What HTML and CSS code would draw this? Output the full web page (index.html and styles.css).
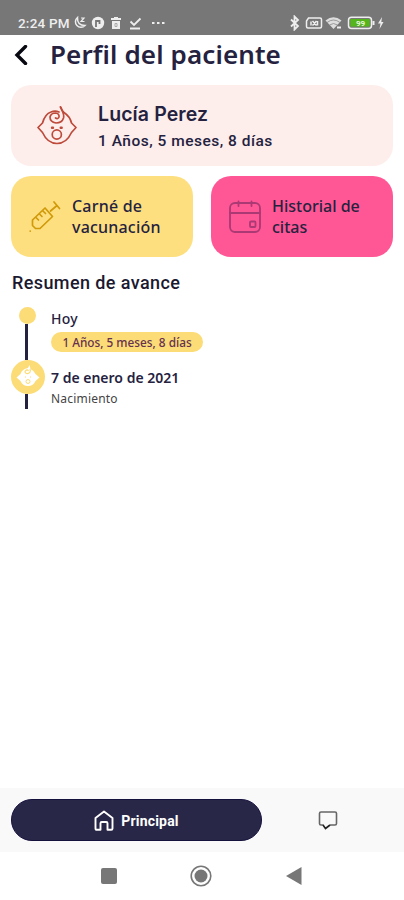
FILE: index.html
```html
<!DOCTYPE html>
<html lang="es">
<head>
<meta charset="utf-8">
<title>Perfil del paciente</title>
<link rel="stylesheet" href="styles.css">
</head>
<body>
<div class="status">
  <span class="time">2:24 PM</span>
  <svg class="left-icons" width="98" height="16" viewBox="0 0 98 16" fill="none" stroke="#eee" stroke-width="1.5">
    <path d="M5.500 2.500A5.500 5.500 0 1 0 13 10.500Q5 10.500 5.500 2.500Z"/><path d="M9 3h3l-3 3.500h3.500" stroke-width="1.200"/>
    <circle cx="26" cy="8" r="6.200" fill="#eee" stroke="none"/><path d="M24 12V6h3.500v3" stroke="#777" stroke-width="1.800"/>
    <path d="M39 4h10M42 3h4" stroke-width="2"/><path d="M40 6h8v8h-8z" fill="#eee" stroke="none"/><path d="M43 8.500h2v3h-2z" stroke="#aaa" stroke-width="1"/>
    <path d="M58 13.500h10M58.500 6.500l3.500 3.500 6.500-6.500" stroke-width="1.800"/>
    <path d="M80 8h2.500M85 8h2.500M90 8h2.500" stroke-width="2"/>
  </svg>
  <svg class="right-icons" width="98" height="16" viewBox="0 0 98 16" fill="none" stroke="#eee" stroke-width="1.500">
    <path d="M2 4.500l7 6.500-3.500 3.500v-13L9 5l-7 6.500" stroke-width="1.800"/>
    <path d="M19.500 3H31q1.500 0 1.500 1.500v7q0 1.500-1.500 1.500H19q-1.500 0-1.500-1.500V6z"/><path d="M22 6.500v4M28.500 6v4.500M23.500 6l4 4.500M27.500 6l-4 4.500"/>
    <path d="M36.500 5.500q8-6.500 16 0L44.500 14z" fill="#ddd" stroke="none"/><path d="M38 7.500q6.500-5 13 0M40.500 10q4-3 8 0" stroke="#888" stroke-width=".8"/><path d="M48 12.500h4" stroke-width="2"/>
    <rect x="59.500" y="2.200" width="23" height="11.200" rx="3"/><path d="M84.500 6v4" stroke-width="2"/><rect x="61.300" y="4" width="19.400" height="7.600" fill="#55b51d" stroke="none"/>
    <text x="71.500" y="10.800" class="battery">99</text>
    <path d="M93 2l-4 6.500h2.500l-1 5.500 4-7h-2.200z" fill="#eee" stroke="none"/>
  </svg>
</div>
<header class="title-bar">
  <svg width="14" height="20" viewBox="0 0 14 20" fill="none" stroke="#080811" stroke-width="3.400"><path d="M11.500 1.500L3 10l8.500 8.500" stroke-linecap="round"/></svg>
  <h1>Perfil del paciente</h1>
</header>
<main>
  <section class="patient">
    <svg width="42" height="40" viewBox="0 0 42 40" fill="none" stroke="#bd4a3a" stroke-width="1.700" stroke-linecap="round" stroke-linejoin="round">
      <path d="M24.500 1q1 3.500 3.500 5.500 6 4 7.500 10.500L40 21.500l-4.500 5Q30.500 37.500 21 37.500T6.500 26.500L2 21.500 6.500 17Q9 8 15 6q4-1.700 8 0"/>
      <path d="M24.500 1q4 7 3 11-1.500 5-7.500 5-6-1-6-6 1-4 5.500-4 4 .5 3.500 4-1 2.500-3.500 1"/>
      <circle cx="20.800" cy="28.500" r="4.600"/><path d="M16 21.800h1M24.700 21.800h1" stroke-width="2.400"/>
    </svg>
    <div class="who"><div class="name">Lucía Perez</div><div class="age">1 Años, 5 meses, 8 días</div></div>
  </section>
  <nav class="cards">
    <a class="card yellow">
      <svg width="34" height="34" viewBox="0 0 34 34" fill="none" stroke="#d09a08" stroke-width="1.700" stroke-linecap="round" stroke-linejoin="round">
        <path d="M26 2l5.500 6.500M29 5.500L22.500 11M17 8L24.500 16.500 12 28.500H7.500L4.500 25.500V20zM2.200 31v.1M15 11l2.500 2.500M11.500 14l2.500 2.500M8 17.500l2.500 2.500"/>
      </svg>
      <span>Carné de<br>vacunación</span>
    </a>
    <a class="card pink">
      <svg width="34" height="34" viewBox="0 0 34 34" fill="none" stroke="#aa3974" stroke-width="1.800" stroke-linecap="round">
        <rect x="2" y="3" width="30" height="29" rx="5"/><path d="M2 13h30M10.500 1.500V6M23.500 1.500V6"/><rect x="22" y="21.500" width="5.500" height="5.500" rx="1"/>
      </svg>
      <span>Historial de<br>citas</span>
    </a>
  </nav>
  <h2>Resumen de avance</h2>
  <section class="timeline">
    <div class="track">
      <span class="dot"></span><span class="line long"></span>
      <span class="baby"><svg width="24" height="24" viewBox="0 0 24 24"><path d="M12 3l1.500-3 1 4q4 2 5 5l4 3.500-4 3.500q-2 5-7.500 5t-7.500-5l-4-3.500L4.500 9Q6 4 12 3z" fill="#fff"/><path d="M14 4c2 5-5 6-5 2.500q2-3 3.500-.5M9 12h1M14 12h1" fill="none" stroke="#fcdc76" stroke-width="1.200"/><circle cx="12" cy="16.500" r="2" fill="none" stroke="#fcdc76"/></svg></span>
      <span class="line short"></span>
    </div>
    <div class="events">
      <div class="today">Hoy</div>
      <div class="pill">1 Años, 5 meses, 8 días</div>
      <div class="date">7 de enero de 2021</div>
      <div class="birth">Nacimiento</div>
    </div>
  </section>
</main>
<nav class="tabs">
  <a class="tab-main">
    <svg width="20" height="21" viewBox="0 0 20 21" fill="none" stroke="#fff" stroke-width="1.900" stroke-linejoin="round"><path d="M1.500 8L10 1.500 18.500 8v10.500q0 1.300-1.300 1.300H13.500v-6.500q0-1.300-1.300-1.300H7.800q-1.300 0-1.300 1.300v6.500H2.800q-1.300 0-1.300-1.300z"/></svg>
    <span>Principal</span>
  </a>
  <a class="tab-chat"><svg width="20" height="20" viewBox="0 0 20 20" fill="none" stroke="#666" stroke-width="1.600"><path d="M5.500 15H3q-1.500 0-1.500-1.500V3.500Q1.500 2 3 2h14q1.500 0 1.500 1.500v10Q18.500 15 17 15h-5"/><path d="M5 15l2.500 3.500L12 15" stroke="#222"/></svg></a>
</nav>
<footer class="system">
  <svg width="16" height="16" viewBox="0 0 16 16"><rect width="16" height="16" rx="2" fill="#777"/></svg>
  <svg width="22" height="22" viewBox="0 0 22 22"><circle cx="11" cy="11" r="9.800" fill="none" stroke="#777" stroke-width="1.600"/><circle cx="11" cy="11" r="6.500" fill="#777"/></svg>
  <svg width="16" height="18" viewBox="0 0 16 18"><path d="M0 9L15.500 0v18z" fill="#777"/></svg>
</footer>
</body>
</html>
```
FILE: styles.css
```css
* { box-sizing: border-box; }
body { margin: 0; width: 404px; height: 900px; display: flex; flex-direction: column; background: #fff; color: #25223f; font-family: "Noto Sans", sans-serif; overflow: hidden; }
h1, h2 { margin: 0; font-weight: 600; }
svg { display: block; flex: none; }
.status { height: 35px; background: #777; display: flex; align-items: center; padding: 11px 17px 0 18px; color: #eee; }
.time { width: 54px; font: 500 13.5px/16px Roboto, sans-serif; letter-spacing: .2px; white-space: nowrap; }
.right-icons { margin-left: auto; }
.battery { font: 700 8px Roboto, sans-serif; fill: #e5f5d8; stroke: none; text-anchor: middle; }
.title-bar { height: 50px; padding: 2px 0 12px 14px; display: flex; align-items: center; gap: 22px; }
h1 { font-size: 26px; line-height: 36px; letter-spacing: .12px; padding-bottom: 3px; white-space: nowrap; }
main { flex: 1; padding: 0 11px; }
.patient { height: 81px; border-radius: 20px; background: #fdeeec; display: flex; align-items: center; padding-left: 25px; gap: 20px; }
.who { padding-top: 4px; }
.name { font: 600 19.5px/27px Inter, sans-serif; letter-spacing: .1px; white-space: nowrap; }
.age { font: 500 15.5px/27px Roboto, sans-serif; letter-spacing: .5px; white-space: nowrap; }
.cards { display: grid; grid-template-columns: 182px 182px; gap: 18px; margin-top: 10px; }
.card { height: 81px; border-radius: 20px; display: flex; align-items: center; padding-left: 17px; gap: 10px; font-size: 16px; font-weight: 500; line-height: 21px; white-space: nowrap; }
.yellow { background: #fddf80; letter-spacing: .2px; }
.pink { background: #ff5795; }
h2 { font: 500 18px/24px Roboto, sans-serif; letter-spacing: .4px; padding-left: 1px; margin-top: 14px; color: #1b1930; }
.timeline { display: flex; margin-top: 12px; }
.track { width: 34px; display: flex; flex-direction: column; align-items: center; flex: none; }
.dot { width: 17px; height: 17px; margin-right: 1px; border-radius: 50%; background: #fcdc76; }
.line { width: 3px; margin-right: 3px; background: #25223f; }
.long { height: 36px; }
.baby { width: 34px; height: 34px; border-radius: 50%; background: #fcdc76; display: grid; place-items: center; }
.short { height: 15px; }
.events { padding: 2px 0 0 6px; white-space: nowrap; }
.today { font-size: 14px; line-height: 20px; font-weight: 500; letter-spacing: .3px; }
.pill { width: 152px; height: 20px; margin-top: 3px; border-radius: 10px; background: #fcdc76; color: #66314e; text-align: center; font-size: 11.8px; line-height: 20px; font-weight: 500; }
.date { margin-top: 16px; font-size: 14px; line-height: 20px; font-weight: 600; }
.birth { font-size: 12px; line-height: 21px; letter-spacing: .2px; color: #444; }
.tabs { height: 64px; background: #f9f9f9; display: flex; align-items: center; padding-left: 11px; }
.tab-main { width: 251px; height: 42px; border-radius: 21px; background: #292748; border: 1px solid #15113d; color: #fff; display: flex; align-items: center; justify-content: center; gap: 7px; font: 700 14px/20px Roboto, sans-serif; letter-spacing: .2px; }
.tab-main span { padding-top: 2px; }
.tab-chat { margin-left: 56px; }
.system { height: 48px; display: flex; align-items: center; padding-left: 101px; }
.system svg:nth-child(2) { margin-left: 73px; }
.system svg:nth-child(3) { margin-left: 74px; }
```
